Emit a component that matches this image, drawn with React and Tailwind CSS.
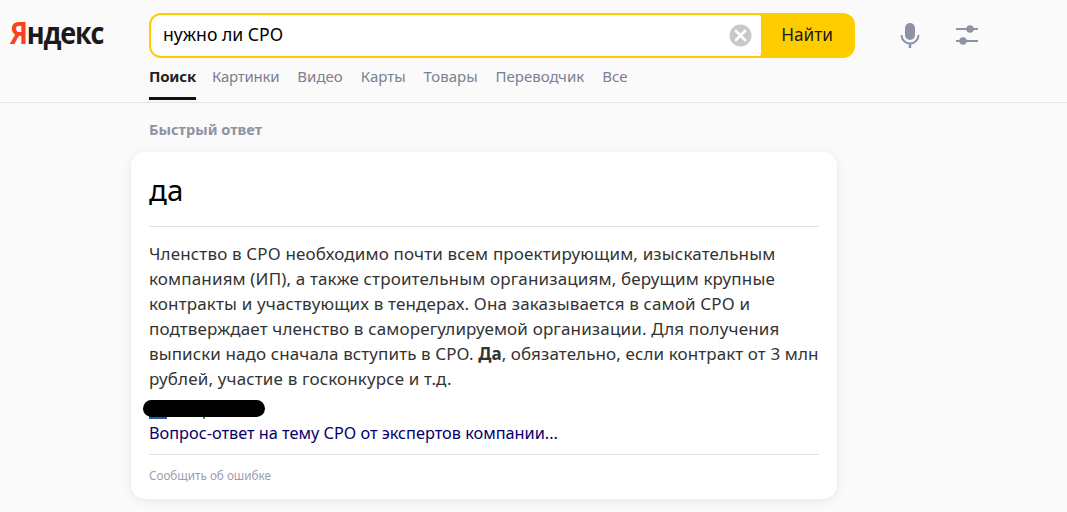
import React from "react";

const tabs = ["Видео", "Карты", "Товары", "Переводчик", "Все"];

export default function App() {
  return (
    <div className="h-[512px] w-[1067px] overflow-hidden bg-[#fafafa] font-['Noto_Sans',sans-serif]">
      <header className="h-[103px] border-b border-[#e4e4ea] flex items-start">
        <div className="w-[149px] shrink-0 pl-[10px] pt-[14px] font-['Open_Sans',sans-serif] text-[27px] leading-[40px] font-bold tracking-[-1.2px] text-[#1a1a1a]">
          <div className="origin-[0_31px] scale-y-110">
            <span className="text-[#fc3f1d]">Я</span>ндекс
          </div>
        </div>
        <div className="w-[706px] shrink-0">
          <div className="mt-[13px] h-[45px] flex rounded-[12px] bg-[#ffcc00] p-[2px]">
            <div className="flex-1 flex items-center justify-between rounded-l-[10px] rounded-r-[2px] bg-white pl-[12px] pr-[9px]">
              <span className="pb-[2px] text-[17.6px] text-black">нужно ли СРО</span>
              <svg width="23" height="23" viewBox="0 0 23 23">
                <circle cx="11.5" cy="11.5" r="11" fill="#c9c9c9" />
                <path d="M7 7l9 9M16 7l-9 9" stroke="#fff" strokeWidth="2.6" strokeLinecap="round" />
              </svg>
            </div>
            <div className="w-[92px] pb-[2px] flex items-center justify-center text-[17.2px] text-[#1a1a1a]">Найти</div>
          </div>
          <nav className="mt-[5px] flex gap-[18px] text-[15px] leading-[24px] text-[#7b7f93]">
            <div className="h-[37px] w-[47px] whitespace-nowrap border-b-[3px] border-[#111] pt-[1px] font-bold tracking-[-0.2px] text-[#222] -mr-[2px]">Поиск</div>
            <div className="pt-[1px] tracking-[-0.25px]">Картинки</div>
            {tabs.map((t) => (
              <div key={t} className="pt-[1px]">{t}</div>
            ))}
          </nav>
        </div>
        <div className="flex items-center gap-[36px] pl-[45px] pt-[22px]">
          <svg width="20" height="26" viewBox="0 0 20 26" fill="none">
            <rect x="5" y="1" width="10" height="17" rx="5" fill="#8e92a6" />
            <path d="M1.5 13a8.5 8.5 0 0 0 17 0" stroke="#8e92a6" strokeWidth="2" />
            <path d="M10 21v5" stroke="#8e92a6" strokeWidth="2.5" />
          </svg>
          <svg width="22" height="22" viewBox="0 0 22 22" fill="none">
            <path d="M0 5h22M0 17h22" stroke="#8e92a6" strokeWidth="2" />
            <circle cx="14" cy="5" r="3.7" fill="#8e92a6" />
            <circle cx="7" cy="17" r="3.7" fill="#8e92a6" />
          </svg>
        </div>
      </header>

      <main className="pl-[131px]">
        <div className="pl-[18px] pt-[16px] text-[14.6px] leading-[20px] font-bold text-[#8f92a3]">Быстрый ответ</div>
        <section className="relative mt-[13px] w-[706px] h-[347px] rounded-[14px] bg-white shadow-[0_2px_10px_rgba(0,0,0,0.08)] px-[18px]">
          <div className="h-[75px] border-b border-[#e2e2e2] pt-[19px] text-[29.5px] leading-[38px] text-black">да</div>
          <p className="mt-[14px] whitespace-nowrap text-[17px] leading-[25px] tracking-[0.15px] text-[#333]">
            Членство в СРО необходимо почти всем проектирующим, изыскательным<br />
            компаниям (ИП), а также строительным организациям, берущим крупные<br />
            контракты и участвующих в тендерах. Она заказывается в самой СРО и<br />
            подтверждает членство в саморегулируемой организации. Для получения<br />
            <span className="tracking-[0.1px]">выписки надо сначала вступить в СРО. <b className="font-bold">Да</b>, обязательно, если контракт от 3 млн</span><br />
            рублей, участие в госконкурсе и т.д.
          </p>
          <div className="relative mt-[13px] h-[18px]">
            <div className="absolute left-0 top-[12px] h-[3px] w-[18px] bg-[#1f5fb0]" />
            <div className="absolute left-[54px] top-[13px] h-[2px] w-[2px] bg-[#3a9a2a]" />
          </div>
          <div className="absolute left-[12px] top-[248px] h-[17px] w-[122px] rounded-full bg-black" />
          <div className="h-[33px] border-b border-[#e2e2e2] whitespace-nowrap text-[16.3px] leading-[22px] text-[#04006b]">Вопрос-ответ на тему СРО от экспертов компании...</div>
          <div className="pt-[10px] text-[11.7px] leading-[20px] text-[#9a9dad]">Сообщить об ошибке</div>
        </section>
      </main>
    </div>
  );
}
